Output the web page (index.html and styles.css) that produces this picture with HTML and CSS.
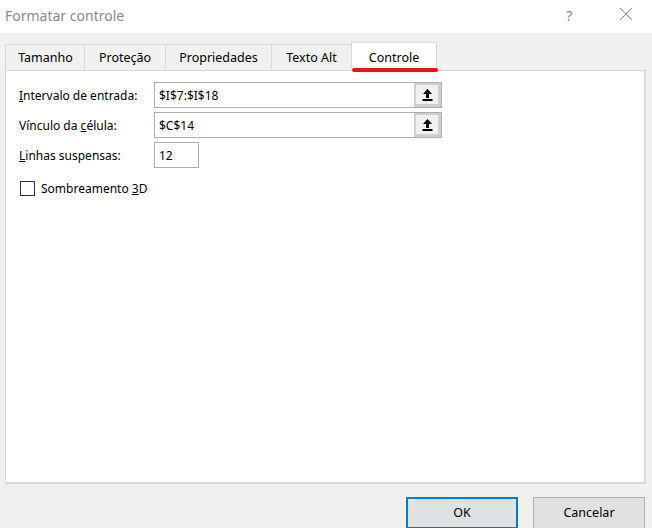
FILE: index.html
```html
<!DOCTYPE html>
<html>
<head>
<title>Formatar controle</title>
<meta content="width=device-width, initial-scale=1" name="viewport" />
<link rel="stylesheet" href="styles.css">
</head>
<body>
<div class='dialog'>
  <div class='titlebar'>
    <div class='title'>Formatar controle</div>
    <div class='help'>?</div>
    <div class='close'>
      <svg width="14" height="14" viewBox="0 0 14 14"><path d="M1 1 L13 13 M13 1 L1 13" stroke="#8a8a8a" stroke-width="1" fill="none"/></svg>
    </div>
  </div>

  <div class='body'>
    <div class='tabs'>
      <div class='tab tab-size'>Tamanho</div>
      <div class='tab tab-prot'>Proteção</div>
      <div class='tab tab-prop'>Propriedades</div>
      <div class='tab tab-alt'>Texto Alt</div>
      <div class='tab tab-active'>Controle</div>
    </div>

    <div class='panel'>
      <div class='row'>
        <div class='lbl'><u>I</u>ntervalo de entrada:</div>
        <div class='field field-wide'>
          <span class='val'>$I$7:$I$18</span>
          <span class='pick'><svg width="11" height="14" viewBox="0 0 11 14"><path d="M5.5 1 L10 6 L7 6 L7 10 L4 10 L4 6 L1 6 Z" fill="#000"/><rect x="0.5" y="11" width="10" height="2" fill="#000"/></svg></span>
        </div>
      </div>
      <div class='row'>
        <div class='lbl'>Vínculo da <u>c</u>élula:</div>
        <div class='field field-wide'>
          <span class='val'>$C$14</span>
          <span class='pick'><svg width="11" height="14" viewBox="0 0 11 14"><path d="M5.5 1 L10 6 L7 6 L7 10 L4 10 L4 6 L1 6 Z" fill="#000"/><rect x="0.5" y="11" width="10" height="2" fill="#000"/></svg></span>
        </div>
      </div>
      <div class='row'>
        <div class='lbl'><u>L</u>inhas suspensas:</div>
        <div class='field field-small'>
          <span class='val'>12</span>
        </div>
      </div>
      <div class='check-row'>
        <span class='chk'></span>
        <span class='chk-lbl'>Sombreamento <u>3</u>D</span>
      </div>
    </div>

    <div class='buttons'>
      <div class='btn btn-ok'>OK</div>
      <div class='btn'>Cancelar</div>
    </div>
  </div>
</div>
</body>
</html>
```

FILE: styles.css
```css
*, body {
  margin: 0;
  padding: 0;
  box-sizing: border-box;
}
body {
  font-family: "Noto Sans", "Open Sans", sans-serif;
  font-size: 12px;
  color: #000;
  background: #f0f0f0;
}
.dialog {
  width: 652px;
  height: 528px;
  overflow: hidden;
}
.titlebar {
  display: flex;
  align-items: center;
  height: 33px;
  background: #fff;
}
.title {
  flex: 1;
  padding-left: 5px;
  font-size: 14px;
  color: #8a8a8a;
  padding-bottom: 3px;
}
.help {
  width: 16px;
  font-size: 15px;
  color: #8a8a8a;
  margin-right: 37px;
  padding-bottom: 3px;
}
.close {
  width: 33px;
  padding-bottom: 2px;
}
.body {
  padding-top: 9px;
}
.tabs {
  display: flex;
  align-items: flex-end;
  height: 28px;
  padding-left: 5px;
}
.tab {
  height: 26px;
  line-height: 26px;
  font-size: 12.5px;
  border-top: 1px solid #d9d9d9;
  border-right: 1px solid #d9d9d9;
  text-align: center;
}
.tab-size {
  width: 80px;
  border-left: 1px solid #d9d9d9;
  padding-left: 1px;
}
.tab-prot { width: 81px; }
.tab-prop { width: 106px; }
.tab-alt { width: 79px; border-right: none; }
.tab-active {
  position: relative;
  width: 86px;
  height: 29px;
  margin-bottom: -1px;
  background: #fff;
  border-left: 1px solid #d9d9d9;
  line-height: 30px;
}
.tab-active::after {
  content: '';
  position: absolute;
  left: 0;
  right: -2px;
  bottom: -1px;
  height: 4px;
  border-radius: 2px;
  background: #e3141c;
}
.panel {
  height: 414px;
  margin: 0 6px 0 5px;
  padding: 11px 0 0 13px;
  background: #fff;
  border: 1px solid #d9d9d9;
  border-right-width: 2px;
  border-bottom-width: 2px;
}
.row {
  display: flex;
  align-items: center;
  margin-bottom: 4px;
}
.lbl {
  width: 135px;
  font-size: 12px;
}
.field {
  display: flex;
  align-items: center;
  height: 26px;
  border: 1px solid #adadad;
  background: #fff;
}
.field-wide {
  width: 288px;
}
.field-small {
  width: 45px;
}
.val {
  flex: 1;
  padding-left: 4px;
  font-size: 12px;
}
.pick {
  display: flex;
  align-items: center;
  justify-content: center;
  width: 27px;
  height: 24px;
  background: #f0f0f0;
  border-top: 2px solid #cfcfcf;
  border-left: 2px solid #cfcfcf;
  border-right: 3px solid #cfcfcf;
  border-bottom: 3px solid #cfcfcf;
}
.pick svg {
  display: block;
}
.check-row {
  display: flex;
  align-items: center;
  margin-top: 12px;
}
.chk {
  width: 15px;
  height: 15px;
  border: 1px solid #333;
  background: #fff;
  margin-left: 1px;
}
.chk-lbl {
  margin-left: 6px;
  font-size: 12px;
}
.buttons {
  display: flex;
  justify-content: flex-end;
  padding: 13px 7px 0 0;
}
.btn {
  width: 112px;
  height: 32px;
  line-height: 30px;
  text-align: center;
  font-size: 12.5px;
  background: #e1e1e1;
  border: 1px solid #adadad;
  margin-left: 15px;
}
.btn-ok {
  border: 2px solid #0078d7;
  line-height: 28px;
}
```
